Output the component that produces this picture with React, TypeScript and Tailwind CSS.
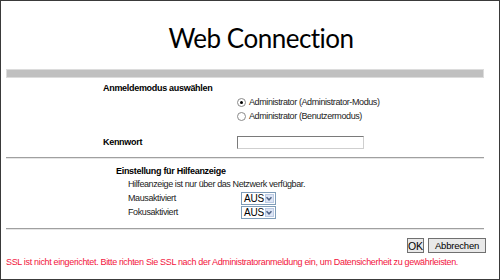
import React from "react";

const font = { fontFamily: '"Liberation Sans", Arial, sans-serif' };

function Radio({ checked }: { checked?: boolean }) {
  return (
    <span className="inline-flex items-center justify-center w-[9px] h-[9px] rounded-full border border-[#8a8a8a] bg-white mr-[3px] shrink-0">
      {checked ? <span className="w-[3px] h-[3px] rounded-full bg-black" /> : null}
    </span>
  );
}

function Select() {
  return (
    <div className="flex items-stretch h-[13px] w-[35px] border border-[#7f9db9] bg-white">
      <span className="flex-1 text-[10px] leading-[11px] tracking-[-0.2px] text-black pl-[2px]">AUS</span>
      <span className="w-[10px] m-[1px] flex items-center justify-center bg-[#dde5f5] border border-[#bccbe4]">
        <svg width="6" height="5" viewBox="0 0 6 5">
          <path d="M0.5 1.2 L3 3.8 L5.5 1.2" stroke="#4d6185" strokeWidth="1.5" fill="none" />
        </svg>
      </span>
    </div>
  );
}

export default function App() {
  return (
    <div
      className="w-[500px] h-[280px] bg-white border border-[#3a3a3a] overflow-hidden text-[#222] text-[9px] tracking-[-0.4px] leading-[13px]"
      style={font}
    >
      <div className="flex justify-center pt-[22px] pl-[22px] h-[68px]">
        <span
          className="text-[26px] leading-[30px] text-black tracking-[-0.5px]"
          style={{ fontFamily: 'Lato, sans-serif', fontWeight: 400 }}
        >
          Web Connection
        </span>
      </div>
      <div className="ml-[5px] mr-[15px] h-[9px] bg-[#c0c0c0] border border-[#dcdcdc]" />

      <div className="pl-[102px] pt-[4px]">
        <div className="h-[13px] flex items-center font-bold text-[9px] tracking-[-0.3px] text-black">Anmeldemodus auswählen</div>
        <div className="pl-[134px] flex flex-col">
          <div className="h-[14px] flex items-center"><Radio checked />Administrator (Administrator-Modus)</div>
          <div className="h-[14px] flex items-center"><Radio />Administrator (Benutzermodus)</div>
        </div>
        <div className="flex items-center h-[14px] mt-[12px]">
          <div className="w-[134px] font-bold text-[9px] tracking-[-0.3px] text-black">Kennwort</div>
          <div className="w-[127px] h-[13px] border border-[#7a7a7a] border-r-[#cfcfcf] border-b-[#cfcfcf] bg-white" />
        </div>
      </div>

      <div className="ml-[5px] mr-[15px] mt-[8px] h-[2px] border-t border-[#a0a0a0] border-b border-b-[#e6e6e6]" />

      <div className="pl-[115px] pt-[6px]">
        <div className="h-[13px] flex items-center font-bold text-[9px] tracking-[-0.3px] text-black">Einstellung für Hilfeanzeige</div>
        <div className="pl-[12px]">
          <div className="h-[12px] flex items-center">Hilfeanzeige ist nur über das Netzwerk verfügbar.</div>
          <div className="flex items-center h-[14px] mt-[1px]">
            <div className="w-[113px]">Mausaktiviert</div>
            <Select />
          </div>
          <div className="flex items-center h-[14px]">
            <div className="w-[113px]">Fokusaktiviert</div>
            <Select />
          </div>
        </div>
      </div>

      <div className="ml-[5px] mr-[15px] mt-[9px] h-[2px] border-t border-[#a0a0a0] border-b border-b-[#e6e6e6]" />

      <div className="flex justify-end gap-[4px] mr-[13px] mt-[8px]">
        <button className="h-[15px] w-[17px] text-[10.5px] tracking-[-0.2px] leading-[12px] bg-[#e9e9e9] border border-[#707070] text-black">OK</button>
        <button className="h-[15px] w-[58px] text-[9.5px] tracking-[-0.2px] leading-[12px] bg-[#e9e9e9] border border-[#707070] text-black">Abbrechen</button>
      </div>
      <div className="pl-[5px] mt-[3px] h-[13px] flex items-center text-[9px] tracking-[-0.33px] text-[#f2143c] whitespace-nowrap">
        SSL ist nicht eingerichtet. Bitte richten Sie SSL nach der Administratoranmeldung ein, um Datensicherheit zu gewährleisten.
      </div>
    </div>
  );
}
